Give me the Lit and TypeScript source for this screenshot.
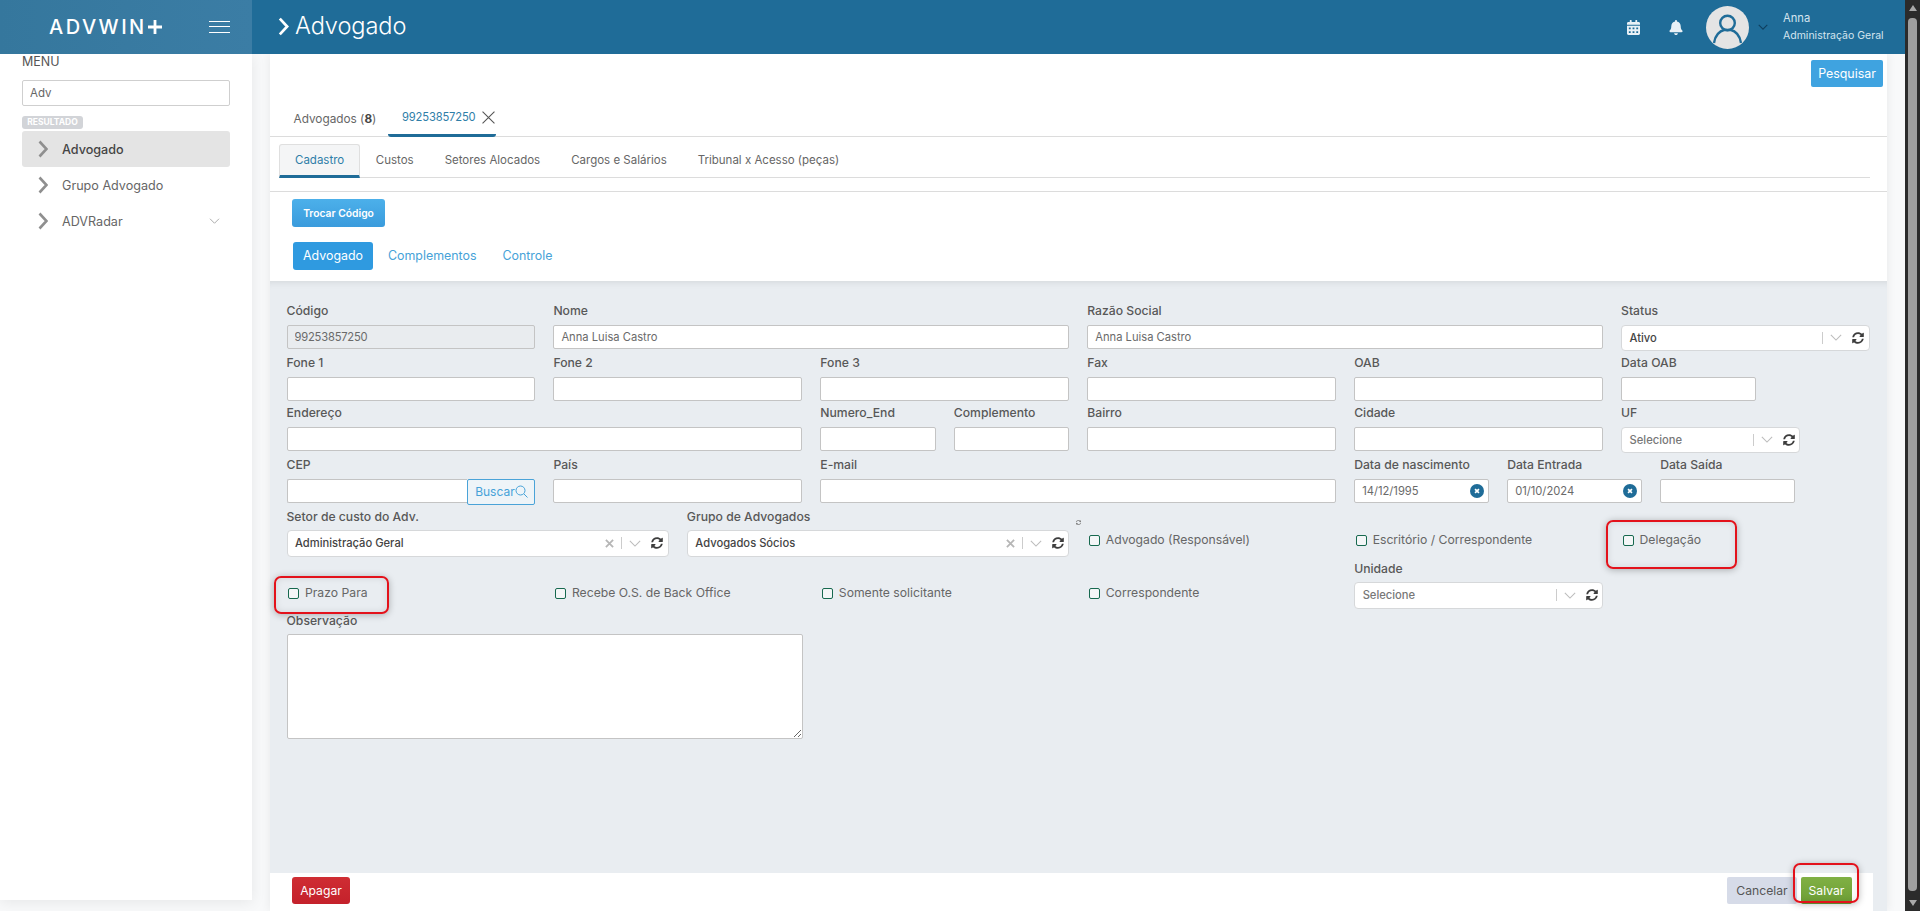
import { LitElement, html, css } from "lit";
import { customElement } from "lit/decorators.js";

const syncPath = "M370.72 133.28C339.458 104.008 298.888 87.962 255.848 88c-77.458.068-144.328 53.178-162.791 126.85-1.344 5.363-6.122 9.15-11.651 9.15H24.103c-7.498 0-13.194-6.807-11.807-14.176C33.933 94.924 134.813 8 256 8c66.448 0 126.791 26.136 171.315 68.685L463.03 40.97C478.149 25.851 504 36.559 504 57.941V192c0 13.255-10.745 24-24 24H345.941c-21.382 0-32.09-25.851-16.971-40.971l41.75-41.749zM32 296h134.059c21.382 0 32.09 25.851 16.971 40.971l-41.75 41.75c31.262 29.273 71.835 45.319 114.876 45.28 77.418-.07 144.315-53.144 162.787-126.849 1.344-5.363 6.122-9.15 11.651-9.15h57.304c7.498 0 13.194 6.807 11.807 14.176C478.067 417.076 377.187 504 256 504c-66.448 0-126.791-26.136-171.315-68.685L48.97 471.03C33.851 486.149 8 475.441 8 454.059V320c0-13.255 10.745-24 24-24z";
const calPath = "M0 464c0 26.5 21.5 48 48 48h352c26.5 0 48-21.5 48-48V192H0v272zm320-196c0-6.6 5.4-12 12-12h40c6.6 0 12 5.4 12 12v40c0 6.6-5.4 12-12 12h-40c-6.6 0-12-5.4-12-12v-40zm0 128c0-6.6 5.4-12 12-12h40c6.6 0 12 5.4 12 12v40c0 6.6-5.4 12-12 12h-40c-6.6 0-12-5.4-12-12v-40zM192 268c0-6.6 5.4-12 12-12h40c6.6 0 12 5.4 12 12v40c0 6.6-5.4 12-12 12h-40c-6.6 0-12-5.4-12-12v-40zm0 128c0-6.6 5.4-12 12-12h40c6.6 0 12 5.4 12 12v40c0 6.6-5.4 12-12 12h-40c-6.6 0-12-5.4-12-12v-40zM64 268c0-6.6 5.4-12 12-12h40c6.6 0 12 5.4 12 12v40c0 6.6-5.4 12-12 12H76c-6.6 0-12-5.4-12-12v-40zm0 128c0-6.6 5.4-12 12-12h40c6.6 0 12 5.4 12 12v40c0 6.6-5.4 12-12 12H76c-6.6 0-12-5.4-12-12v-40zM400 64h-48V16c0-8.8-7.2-16-16-16h-32c-8.8 0-16 7.2-16 16v48H160V16c0-8.8-7.2-16-16-16h-32c-8.8 0-16 7.2-16 16v48H48C21.5 64 0 85.5 0 112v48h448v-48c0-26.5-21.5-48-48-48z";
const bellPath = "M224 512c35.32 0 63.97-28.65 63.97-64H160.03c0 35.35 28.65 64 63.97 64zm215.39-149.71c-19.32-20.76-55.47-51.99-55.47-154.29 0-77.7-54.48-139.9-127.94-155.16V32c0-17.67-14.32-32-31.98-32s-31.98 14.33-31.98 32v20.84C118.56 68.1 64.08 130.3 64.08 208c0 102.3-36.15 133.53-55.47 154.29-6 6.45-8.66 14.16-8.61 21.71.11 16.4 12.98 32 32.1 32h383.8c19.12 0 32-15.6 32.1-32 .05-7.55-2.61-15.27-8.61-21.71z";

const chevronRight = (cls: string) => html`<svg class=${cls} viewBox="0 0 10 18"><path d="M1.5 1.5 8.5 9l-7 7.5" fill="none" stroke="currentColor" stroke-width="2.6"/></svg>`;
const chevronDown = html`<svg class="chev" viewBox="0 0 14 8"><path d="M1 1l6 6 6-6" fill="none" stroke="currentColor" stroke-width="1.3"/></svg>`;
const sync = html`<svg class="sync" viewBox="0 0 512 512"><path d=${syncPath} fill="currentColor"/></svg>`;

function field(label: string, span: number, control: unknown, extra = "") {
  return html`<div class="cell s${span} ${extra}"><label>${label}</label>${control}</div>`;
}
const input = (value = "", cls = "") => html`<input class="ctl ${cls}" .value=${value} />`;
function select(text: string, opts: { clear?: boolean; placeholder?: boolean } = {}) {
  return html`<div class="select">
    <span class="sel-text ${opts.placeholder ? "ph" : ""}">${text}</span>
    ${opts.clear ? html`<svg class="clear" viewBox="0 0 10 10"><path d="M1 1l8 8M9 1l-8 8" stroke="currentColor" stroke-width="2"/></svg>` : ""}
    <span class="sep"></span>${chevronDown}${sync}
  </div>`;
}
const dateCtl = (value: string) => html`<div class="date">
  <input class="ctl" .value=${value} />
  <span class="dclear"><svg viewBox="0 0 10 10"><path d="M3.6 3.6l2.8 2.8M6.4 3.6l-2.8 2.8" stroke="#fff" stroke-width="1.2"/></svg></span>
</div>`;
const check = (label: string, span: number, extra = "") => html`<div class="cell s${span} chk ${extra}"><span class="box"></span><span>${label}</span></div>`;

@customElement("app-root")
export class AppRoot extends LitElement {
  static styles = css`
    :host { display: block; height: 911px; overflow: hidden; position: relative; background: #f8f9fa;
      font-family: Inter, "Open Sans", sans-serif; color: #555; }
    * { box-sizing: border-box; }
    .shell { display: flex; height: 911px; }
    .page { flex: 1; min-width: 0; display: flex; flex-direction: column; }
    .scroll { width: 15px; background: #2b2b2b; display: flex; flex-direction: column; align-items: center; padding: 5px 3px; }
    .scroll .up, .scroll .down { width: 0; height: 0; border-left: 4.5px solid transparent; border-right: 4.5px solid transparent; }
    .scroll .up { border-bottom: 6px solid #a8a8a8; }
    .scroll .down { border-top: 6px solid #a8a8a8; margin-top: 9px; }
    .scroll .thumb { flex: 1; width: 9px; background: #9f9f9f; border-radius: 4px; margin-top: 7px; }

    header { height: 54px; display: flex; background: #1f6c98; color: #fff; position: relative; z-index: 2; flex: none; }
    .brand { width: 252px; background: linear-gradient(90deg, #35779d, #3b7da5); display: flex; align-items: center; padding-left: 49px; }
    .logo { font-size: 20px; font-weight: 500; letter-spacing: 2.5px; color: #fff; line-height: 1; }
    .plus { width: 14px; height: 14px; margin-left: 1px; }
    .burger { margin-left: auto; margin-right: 22px; width: 21px; height: 12px; border-top: 1.5px solid #fff; border-bottom: 1.5px solid #fff; position: relative; }
    .burger::after { content: ""; position: absolute; left: 0; right: 0; top: 3.75px; border-top: 1.5px solid #fff; }
    .title { display: flex; align-items: center; padding: 0 0 3px 26px; font-size: 23.6px; font-weight: 300; flex: 1; letter-spacing: -0.1px; }
    .title svg { width: 11px; height: 19px; margin: 2px 6px 0 0; color: #fff; }
    .h-right { display: flex; align-items: center; margin-right: 22px; }
    .hicon { color: #e9f1f6; height: 15px; display: block; }
    .hicon.cal { width: 13px; margin-right: 29px; }
    .hicon.bell { width: 14px; margin-right: 23px; }
    .avatar { width: 43px; height: 43px; display: block; }
    .h-chev { width: 10px; height: 6px; margin: 0 15px 0 9px; color: #0f3f5e; display: block; }
    .h-chev path { stroke-width: 1.5; }
    .user { font-size: 10.5px; color: #d3e4ef; line-height: 18px; font-weight: 400; width: 100px; white-space: nowrap; }
    .user div:first-child { font-size: 11.2px; }

    .body { flex: 1; min-height: 0; display: flex; }
    aside { width: 252px; background: #fff; height: 846px; box-shadow: 0 2px 14px rgba(0,0,0,.08); padding: 0 22px; flex: none; position: relative; }
    .menu { font-size: 12.5px; color: #555; height: 26px; line-height: 16px; }
    .search { width: 208px; height: 26px; display: block; border: 1px solid #cfcfcf; border-radius: 2px; padding: 0 7px; font: inherit; font-size: 11.5px; color: #666; outline: none; }
    .badge { display: inline-block; margin-top: 10px; width: 61px; height: 13px; border-radius: 3px; background: #d2d4d8; color: #fff; font-size: 8.5px; font-weight: 700; line-height: 13px; text-align: center; vertical-align: top; }
    .nav { margin-top: 2px; }
    .nav-item { height: 36px; display: flex; align-items: center; padding-left: 16px; border-radius: 3px; font-size: 12.6px; color: #666; }
    .nav-item.on { background: #e4e4e4; color: #444; font-weight: 500; }
    .nav-item .cv { width: 10px; height: 18px; color: #8f8f8f; margin-right: 14px; }
    .nav-item .chev { width: 11px; height: 6px; margin-left: auto; margin-right: 10px; color: #aaa; display: block; }

    main { flex: 1; min-width: 0; margin-left: 18px; margin-right: 18px; display: flex; flex-direction: column; background: #fff; box-shadow: 0 0 10px rgba(0,0,0,.07); }
    .top { display: flex; justify-content: flex-end; padding: 6px 4px 0 0; }
    .btn { border: 0; border-radius: 2px; color: #fff; font: inherit; display: flex; align-items: center; justify-content: center; height: 27px; padding: 0; }
    .btn.search-btn { width: 72px; font-size: 12.4px; background: #3fa3e0; }
    .tabs { height: 50px; display: flex; padding-left: 23.5px; border-bottom: 1px solid #dcdcdc; font-size: 11.8px; }
    .tab1 { color: #666; width: 94.5px; padding-top: 24.5px; line-height: 14px; }
    .tab1 b { color: #444; font-weight: 700; }
    .tab2 { width: 108px; height: 50px; border-bottom: 3.5px solid #1f6c98; border-radius: 0 0 3px 3px; padding: 22.5px 0 0 14px; color: #2f7ea8; line-height: 14px; display: flex; font-size: 11.2px; letter-spacing: -.15px; white-space: nowrap; }
    .tab2 svg { width: 13px; height: 13px; margin-left: 6px; margin-top: 1px; color: #555; flex: none; }
    .subtabs { margin: 7px 17px 0 9px; height: 33.7px; display: flex; border-bottom: 1px solid #dcdcdc; font-size: 11.5px; color: #666; }
    .st { padding: 0 15.5px; height: 33.7px; line-height: 32px; white-space: nowrap; }
    .st.on { background: #f4f5f6; border: 1px solid #dfdfdf; border-bottom: 3px solid #1f6c98; border-radius: 3px 3px 0 0; padding: 0 15px; color: #2f7ea8; line-height: 30px; }
    .rule { margin-top: 13px; border-top: 1px solid #dcdcdc; }
    .swap { padding: 7px 0 0 22px; }
    .btn.swap-btn { width: 93px; height: 28px; font-size: 10.3px; font-weight: 600; border-radius: 3px; background: linear-gradient(#4cb0ea, #3a9bdc); }
    .pills { margin-top: 15px; padding: 0 0 11px 23px; display: flex; align-items: center; gap: 26px; font-size: 12.4px; color: #46a2d8; height: 39px; }
    .pill { width: 80px; height: 28px; border-radius: 3px; background: #2f9ae0; color: #fff; display: flex; align-items: center; justify-content: center; margin-right: -11px; flex: none; }

    .lower { flex: 1; min-height: 0; background: #e9edf1; display: flex; flex-direction: column; }
    .form { flex: 1; min-height: 0; padding: 18.5px 17px 0 16.5px; box-shadow: inset 0 8px 8px -8px rgba(0,0,0,.12); }
    .row { display: grid; grid-template-columns: repeat(12, 115.46px); column-gap: 18px; }
    .cell { min-width: 0; position: relative; }
    .s1 { grid-column: span 1; } .s2 { grid-column: span 2; } .s3 { grid-column: span 3; } .s4 { grid-column: span 4; }
    label { display: block; height: 25.5px; line-height: 23px; font-size: 12.2px; font-weight: 500; color: #585858; white-space: nowrap; }
    .ctl { display: block; width: 100%; height: 24.5px; border: 1px solid #c4c4c4; border-radius: 2px; background: #fff; padding: 0 7px; font: inherit; font-size: 11.2px; color: #6a6a6a; outline: none; }
    .ctl.ro { background: #e9ecef; letter-spacing: -.2px; }
    .w134 { width: 134.5px; }
    .select { height: 26.5px; border: 1px solid #d6d8da; border-radius: 4px; background: #fff; display: flex; align-items: center; padding: 0 4.5px 0 7.5px; font-size: 11.2px; color: #444; font-weight: 500; }
    .sel-text { flex: 1; white-space: nowrap; }
    .sel-text.ph { color: #777; }
    .clear { width: 9px; height: 9px; color: #b6b6b6; margin-right: 7px; flex: none; }
    .sep { width: 1px; height: 12px; background: #ccc; flex: none; }
    .select .chev { width: 12px; height: 7px; color: #bdbdbd; margin: 0 10px 0 7px; flex: none; }
    .sync { width: 12px; height: 12px; color: #3d3d3d; flex: none; }
    .uf { width: 179px; }
    .cep { display: flex; height: 24.5px; }
    .cep .ctl { flex: 1; min-width: 0; border-right: 0; border-radius: 2px 0 0 2px; }
    .buscar { width: 68px; height: 26px; flex: none; background: #eef4f8; border: 1px solid #4aa3d8; border-radius: 2px; color: #46a2d8; font-size: 12px; display: flex; align-items: center; justify-content: center; }
    .buscar svg { width: 13px; height: 13px; }
    .dates { display: flex; gap: 18.5px; }
    .dates > div { width: 134.5px; }
    .date { position: relative; }
    .dclear { position: absolute; right: 5px; top: 5px; width: 14px; height: 14px; border-radius: 50%; background: #1f6c98; display: flex; }
    .dclear svg { width: 14px; height: 14px; }
    .gap2 { margin-bottom: 1.5px; }
    .chk { padding-top: 26.5px; padding-left: 1.5px; display: flex; align-items: flex-start; font-size: 12.2px; color: #666; line-height: 18px; white-space: nowrap; }
    .box { width: 11px; height: 11px; border: 1.2px solid #17694f; border-radius: 2px; margin-top: 4px; margin-right: 6px; flex: none; background: #f4f6f7; }
    .chk.wide { padding-top: 27.5px; }
    .tiny { position: absolute; left: -11px; top: 15px; width: 5px; height: 5px; color: #777; }
    textarea { display: block; width: 516px; height: 105px; border: 1px solid #c4c4c4; border-radius: 2px; background: #fff; outline: none; }
    .foot { height: 38px; flex: none; margin-right: 14px; background: #fff; display: flex; align-items: flex-start; padding: 4px 21px 0 22px; }
    .btn.del { width: 58px; font-size: 12.2px; background: linear-gradient(#cf2d33, #c4212b); border-radius: 3px; margin-right: auto; }
    .btn.cancel { width: 70px; font-size: 12.2px; background: #d6dbe8; color: #555; border-radius: 2px; }
    .btn.save { width: 51px; margin-left: 4px; font-size: 12.2px; background: linear-gradient(#80b044, #6d9e35); border-radius: 2px; }

    .ann { position: absolute; border: 2px solid #e3121b; border-radius: 7px; box-shadow: 0 1px 7px rgba(0,0,0,.28), inset 0 0 7px rgba(0,0,0,.1); pointer-events: none; z-index: 5; }
    .a1 { left: 274px; top: 576px; width: 115px; height: 38px; }
    .a2 { left: 1606px; top: 520px; width: 131px; height: 49px; }
    .a3 { left: 1793px; top: 863px; width: 66px; height: 40px; }
  `;

  render() {
    return html`
      <div class="shell">
        <div class="page">
          <header>
            <div class="brand">
              <span class="logo">ADVWIN</span>
              <svg class="plus" viewBox="0 0 15 15"><path d="M6 0h3v6h6v3H9v6H6V9H0V6h6z" fill="#fff"/></svg>
              <div class="burger"></div>
            </div>
            <div class="title">${chevronRight("")}<span>Advogado</span></div>
            <div class="h-right">
              <svg class="hicon cal" viewBox="0 0 448 512"><path d=${calPath} fill="currentColor"/></svg>
              <svg class="hicon bell" viewBox="0 0 448 512"><path d=${bellPath} fill="currentColor"/></svg>
              <svg class="avatar" viewBox="0 0 43 43">
                <circle cx="21.5" cy="21.5" r="21.5" fill="#e4e4e4"/>
                <circle cx="21.5" cy="17" r="7.3" fill="none" stroke="#1f6c98" stroke-width="2.4"/>
                <path d="M8 37c1-8 6-12 10-13M35 37c-1-8-6-12-10-13M18 24h7" fill="none" stroke="#1f6c98" stroke-width="2.4"/>
              </svg>
              <svg class="h-chev" viewBox="0 0 14 8"><path d="M1 1l6 6 6-6" fill="none" stroke="currentColor"/></svg>
              <div class="user"><div>Anna</div><div>Administração Geral</div></div>
            </div>
          </header>
          <div class="body">
            <aside>
              <div class="menu">MENU</div>
              <input class="search" .value=${"Adv"} />
              <span class="badge">RESULTADO</span>
              <div class="nav">
                <div class="nav-item on">${chevronRight("cv")}Advogado</div>
                <div class="nav-item">${chevronRight("cv")}Grupo Advogado</div>
                <div class="nav-item">${chevronRight("cv")}ADVRadar${chevronDown}</div>
              </div>
            </aside>
            <main>
              <div class="top"><button class="btn search-btn">Pesquisar</button></div>
              <div class="tabs">
                <div class="tab1">Advogados (<b>8</b>)</div>
                <div class="tab2">99253857250<svg viewBox="0 0 12 12"><path d="M.5.5l11 11M11.5.5l-11 11" stroke="currentColor" stroke-width="1"/></svg></div>
              </div>
              <div class="subtabs">
                <div class="st on">Cadastro</div>
                <div class="st">Custos</div>
                <div class="st">Setores Alocados</div>
                <div class="st">Cargos e Salários</div>
                <div class="st">Tribunal x Acesso (peças)</div>
              </div>
              <div class="rule"></div>
              <div class="swap"><button class="btn swap-btn">Trocar Código</button></div>
              <div class="pills"><div class="pill">Advogado</div><span>Complementos</span><span>Controle</span></div>
              <div class="lower">
                <div class="form">
                  <div class="row">
                    ${field("Código", 2, input("99253857250", "ro"))}
                    ${field("Nome", 4, input("Anna Luisa Castro"))}
                    ${field("Razão Social", 4, input("Anna Luisa Castro"))}
                    ${field("Status", 2, select("Ativo"))}
                  </div>
                  <div class="row">
                    ${field("Fone 1", 2, input())}
                    ${field("Fone 2", 2, input())}
                    ${field("Fone 3", 2, input())}
                    ${field("Fax", 2, input())}
                    ${field("OAB", 2, input())}
                    ${field("Data OAB", 2, input("", "w134"))}
                  </div>
                  <div class="row">
                    ${field("Endereço", 4, input())}
                    ${field("Numero_End", 1, input())}
                    ${field("Complemento", 1, input())}
                    ${field("Bairro", 2, input())}
                    ${field("Cidade", 2, input())}
                    ${field("UF", 2, html`<div class="uf">${select("Selecione", { placeholder: true })}</div>`)}
                  </div>
                  <div class="row gap2">
                    ${field("CEP", 2, html`<div class="cep"><input class="ctl" /><div class="buscar">Buscar<svg viewBox="0 0 13 13"><circle cx="5.5" cy="5.5" r="4.5" fill="none" stroke="currentColor"/><path d="M9 9l3.5 3.5" stroke="currentColor"/></svg></div></div>`)}
                    ${field("País", 2, input())}
                    ${field("E-mail", 4, input())}
                    <div class="cell s4 dates">
                      <div><label>Data de nascimento</label>${dateCtl("14/12/1995")}</div>
                      <div><label>Data Entrada</label>${dateCtl("01/10/2024")}</div>
                      <div><label>Data Saída</label><input class="ctl" /></div>
                    </div>
                  </div>
                  <div class="row">
                    ${field("Setor de custo do Adv.", 3, select("Administração Geral", { clear: true }))}
                    ${field("Grupo de Advogados", 3, select("Advogados Sócios", { clear: true }))}
                    <div class="cell s2 chk"><svg class="tiny" viewBox="0 0 512 512"><path d=${syncPath} fill="currentColor"/></svg><span class="box"></span><span>Advogado (Responsável)</span></div>
                    ${check("Escritório / Correspondente", 2)}
                    ${check("Delegação", 2)}
                  </div>
                  <div class="row">
                    ${check("Prazo Para", 2, "wide")}
                    ${check("Recebe O.S. de Back Office", 2, "wide")}
                    ${check("Somente solicitante", 2, "wide")}
                    ${check("Correspondente", 2, "wide")}
                    ${field("Unidade", 2, select("Selecione", { placeholder: true }))}
                  </div>
                  <div class="row">
                    ${field("Observação", 4, html`<textarea></textarea>`)}
                  </div>
                </div>
                <div class="foot">
                  <button class="btn del">Apagar</button>
                  <button class="btn cancel">Cancelar</button>
                  <button class="btn save">Salvar</button>
                </div>
              </div>
            </main>
          </div>
        </div>
        <div class="scroll"><div class="up"></div><div class="thumb"></div><div class="down"></div></div>
      </div>
      <div class="ann a1"></div>
      <div class="ann a2"></div>
      <div class="ann a3"></div>
    `;
  }
}
